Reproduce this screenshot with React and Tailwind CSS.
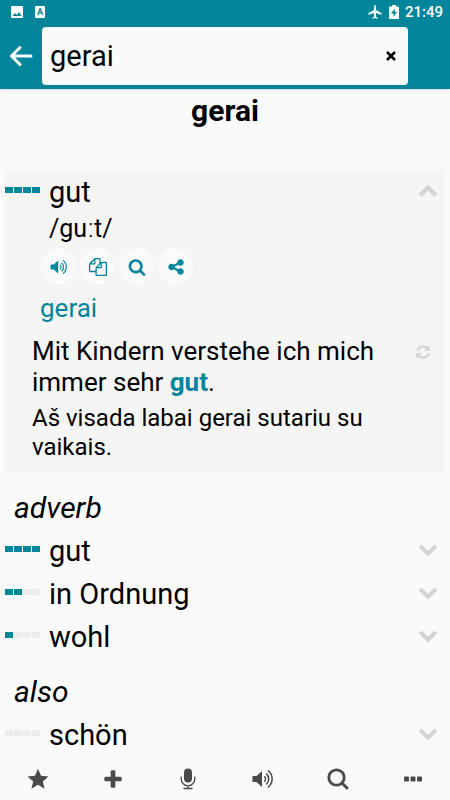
import { useState } from "react";

const paths = {
  up: "M1683 1331l-166 165q-19 19-45 19t-45-19l-531-531-531 531q-19 19-45 19t-45-19l-166-165q-19-19-19-45.5t19-45.5l742-741q19-19 45-19t45 19l742 741q19 19 19 45.5t-19 45.5z",
  down: "M1683 808l-742 741q-19 19-45 19t-45-19l-742-741q-19-19-19-45.5t19-45.5l166-165q19-19 45-19t45 19l531 531 531-531q19-19 45-19t45 19l166 165q19 19 19 45.5t-19 45.5z",
  refresh: "M1639 1056q0 5-1 7-64 268-268 434.5t-478 166.5q-146 0-282.5-55t-243.5-157l-129 129q-19 19-45 19t-45-19-19-45v-448q0-26 19-45t45-19h448q26 0 45 19t19 45-19 45l-137 137q71 66 161 102t187 36q134 0 250-65t186-179q11-17 53-117 8-23 30-23h192q13 0 22.5 9.5t9.5 22.5zm25-800v448q0 26-19 45t-45 19h-448q-26 0-45-19t-19-45 19-45l138-138q-148-137-349-137-134 0-250 65t-186 179q-11 17-53 117-8 23-30 23h-199q-13 0-22.5-9.5t-9.5-22.5v-7q65-268 270-434.5t480-166.5q146 0 284 55.5t245 156.5l130-129q19-19 45-19t45 19 19 45z",
  copy: "M1696 384q40 0 68 28t28 68v1216q0 40-28 68t-68 28h-960q-40 0-68-28t-28-68v-288h-544q-40 0-68-28t-28-68v-672q0-40 20-88t48-76l408-408q28-28 76-48t88-20h416q40 0 68 28t28 68v328q68-40 128-40h416zm-544 213l-299 299h299v-299zm-640-384l-299 299h299v-299zm196 647l316-316v-416h-384v416q0 40-28 68t-68 28h-416v640h512v-256q0-40 20-88t48-76zm956 804v-1152h-384v416q0 40-28 68t-68 28h-416v640h896z",
  search: "M1216 832q0-185-131.5-316.5t-316.5-131.5-316.5 131.5-131.5 316.5 131.5 316.5 316.5 131.5 316.5-131.5 131.5-316.5zm512 832q0 52-38 90t-90 38q-54 0-90-38l-343-342q-179 124-399 124-143 0-273.5-55.5t-225-150-150-225-55.5-273.5 55.5-273.5 150-225 225-150 273.5-55.5 273.5 55.5 225 150 150 225 55.5 273.5q0 220-124 399l343 343q37 37 37 90z",
  share: "M1344 1024q133 0 226.5 93.5t93.5 226.5-93.5 226.5-226.5 93.5-226.5-93.5-93.5-226.5q0-12 2-34l-360-180q-92 86-218 86-133 0-226.5-93.5t-93.5-226.5 93.5-226.5 226.5-93.5q126 0 218 86l360-180q-2-22-2-34 0-133 93.5-226.5t226.5-93.5 226.5 93.5 93.5 226.5-93.5 226.5-226.5 93.5q-126 0-218-86l-360 180q2 22 2 34t-2 34l360 180q92-86 218-86z",
  plus: "M1600 736v192q0 40-28 68t-68 28h-416v416q0 40-28 68t-68 28h-192q-40 0-68-28t-28-68v-416h-416q-40 0-68-28t-28-68v-192q0-40 28-68t68-28h416v-416q0-40 28-68t68-28h192q40 0 68 28t28 68v416h416q40 0 68 28t28 68z",
};

function Icon({ name, className, viewBox = "0 0 1792 1792" }) {
  return (
    <svg viewBox={viewBox} fill="currentColor" className={className} aria-hidden="true">
      <path d={paths[name]} />
    </svg>
  );
}

function Speaker({ className }) {
  return (
    <svg viewBox="0 0 22 20" className={className} fill="none" stroke="currentColor" aria-hidden="true">
      <path d="M.5 7h4L10 2v16l-5.500-5H.5z" fill="currentColor" stroke="none" />
      <path d="M12.300 7.300a3.500 3.500 0 0 1 0 5.400M14.200 4.600a7 7 0 0 1 0 10.800M16 1.700a10.400 10.400 0 0 1 0 16.600" strokeWidth="1.500" />
    </svg>
  );
}

function Frequency({ level }) {
  return (
    <div className="mb-1 flex w-[35px] shrink-0 gap-px" aria-hidden="true">
      {[1, 2, 3, 4].map((n) => (
        <span key={n} className={`h-1.5 w-2 ${n <= level ? "bg-[#00859b]" : "bg-[#ececec]"}`} />
      ))}
    </div>
  );
}

function WordRow({ word, level, open, onToggle }) {
  return (
    <div className="flex h-[43px] items-center">
      <Frequency level={level} />
      <span className="ml-[9px] flex-1 text-[29px] leading-9">{word}</span>
      <button type="button" onClick={onToggle} aria-label={`Toggle ${word}`} aria-expanded={open} className="px-[7px] text-[#d3d3d3]">
        <Icon name={open ? "up" : "down"} viewBox="0 200 1792 1792" className="size-5" />
      </button>
    </div>
  );
}

const groups = [
  {
    title: "adverb",
    words: [
      { word: "gut", level: 4 },
      { word: "in Ordnung", level: 2 },
      { word: "wohl", level: 1 },
    ],
  },
  { title: "also", words: [{ word: "schön", level: 0 }] },
];

const actions = [
  { label: "Listen", icon: <Speaker className="h-4 w-[18px]" /> },
  { label: "Copy", icon: <Icon name="copy" className="size-[18px]" /> },
  { label: "Search", icon: <Icon name="search" className="size-[18px]" /> },
  { label: "Share", icon: <Icon name="share" className="size-[18px]" /> },
];

const tabs = [
  {
    label: "Favorites",
    icon: (
      <svg viewBox="0 0 22 22" className="size-[22px]" fill="currentColor">
        <path d="M11 .8l3 7 7.500.6-5.700 5 1.800 7.400L11 16.800l-6.600 4 1.800-7.400-5.700-5L8 7.800z" />
      </svg>
    ),
  },
  { label: "Add", icon: <Icon name="plus" viewBox="0 -64 1792 1792" className="size-[22px]" /> },
  {
    label: "Dictate",
    icon: (
      <svg viewBox="0 0 16 22" className="h-[22px] w-4" fill="none" stroke="currentColor">
        <rect x="4" y=".5" width="8" height="14" rx="4" fill="currentColor" stroke="none" />
        <path d="M1.200 8.500v2.500a6.800 6.800 0 0 0 13.600 0V8.500M8 17.500v3M3.500 20.500h9" strokeWidth="1.300" />
      </svg>
    ),
  },
  { label: "Listen", icon: <Speaker className="h-5 w-[22px]" /> },
  {
    label: "Search",
    icon: (
      <svg viewBox="0 0 22 22" className="size-[22px]" fill="none" stroke="currentColor">
        <circle cx="9.500" cy="9.500" r="7.700" strokeWidth="2.800" />
        <path d="M15 15l5 5" strokeWidth="3" strokeLinecap="round" />
      </svg>
    ),
  },
  {
    label: "More",
    icon: (
      <svg viewBox="0 0 18 6" className="h-1.5 w-[18px]" fill="currentColor">
        <rect x="0" y=".5" width="5" height="5" rx="1" />
        <rect x="6.500" y=".5" width="5" height="5" rx="1" />
        <rect x="13" y=".5" width="5" height="5" rx="1" />
      </svg>
    ),
  },
];

function StatusBar() {
  return (
    <div className="flex h-6 items-center pr-[7px] pl-[11px]">
      <svg viewBox="0 0 12 12" className="size-3">
        <rect width="12" height="12" rx="1" fill="currentColor" />
        <path d="M1.500 10l2.500-3 1.700 2L8 6l2.700 4z" fill="#00859b" />
      </svg>
      <span className="ml-3 flex h-3 w-2.5 items-center justify-center rounded-[1px] bg-white text-[9px] leading-3 font-bold text-[#00859b]">A</span>
      <svg viewBox="0 0 24 24" className="ml-auto size-4" fill="currentColor">
        <path d="M22 16v-2l-8.500-5V3.500a1.500 1.500 0 0 0-3 0V9L2 14v2l8.500-2.500V19L8 20.500V22l4-1 4 1v-1.500L13.500 19v-5.500z" />
      </svg>
      <svg viewBox="0 0 10 14" className="ml-1.5 h-3.5 w-2.5">
        <path d="M3 0h4v1.500h2q1 0 1 1V13q0 1-1 1H1q-1 0-1-1V2.500q0-1 1-1h2z" fill="currentColor" />
        <path d="M5.800 3.500L2 8.500h2.500v3.500L8 7H5.800z" fill="#00859b" />
      </svg>
      <span className="ml-1.5 text-[15px] leading-6 font-medium">21:49</span>
    </div>
  );
}

export default function App() {
  const [query, setQuery] = useState("gerai");
  const [open, setOpen] = useState(true);

  return (
    <div className="flex min-h-screen flex-col bg-[#fafafa] font-['Roboto',sans-serif] text-black">
      <header className="bg-[#00859b] text-white shadow-sm">
        <StatusBar />
        <div className="flex items-center pt-[3px] pr-[42px] pb-1">
          <button type="button" aria-label="Back" className="flex w-[42px] justify-center">
            <svg viewBox="0 0 24 22" className="h-[22px] w-6" fill="none" stroke="currentColor" strokeWidth="3" strokeLinecap="round" strokeLinejoin="round">
              <path d="M22 11H2.500M11 2.500L2.500 11l8.500 8.500" />
            </svg>
          </button>
          <div className="flex h-[58px] min-w-0 flex-1 items-center rounded bg-[#fafafa] pr-3 pl-2 text-black">
            <input
              aria-label="Search"
              value={query}
              onChange={(e) => setQuery(e.target.value)}
              className="min-w-0 flex-1 bg-transparent text-[29px] leading-9 outline-none"
            />
            <button type="button" aria-label="Clear" onClick={() => setQuery("")}>
              <svg viewBox="0 0 10 10" className="size-2.5" stroke="currentColor" strokeWidth="2.500">
                <path d="M1 1l8 8M9 1L1 9" />
              </svg>
            </button>
          </div>
        </div>
      </header>

      <main className="flex-1 px-[5px]">
        <h1 className="mt-1 mb-[41px] text-center text-[30px] leading-9 font-bold">gerai</h1>

        <section className="mb-0.5 bg-[#f5f5f5] pb-2.5">
          <WordRow word="gut" level={4} open={open} onToggle={() => setOpen(!open)} />
          {open && (
            <>
              <p className="pl-11 text-[25px] leading-8">/guːt/</p>
              <div className="mt-1 flex gap-1 pl-9">
                {actions.map((a) => (
                  <button key={a.label} type="button" aria-label={a.label} className="flex size-[35px] items-center justify-center rounded-full bg-[#fafafa] text-[#00859b]">
                    {a.icon}
                  </button>
                ))}
              </div>
              <p className="mt-2 pl-[35px] text-[26px] leading-8 text-[#00859b]">gerai</p>
              <div className="mt-3 flex items-start pr-3.5 pl-[27px]">
                <div className="flex-1">
                  <p className="mb-1.5 text-[26px] leading-[31px]">
                    Mit Kindern verstehe ich mich immer sehr <b className="text-[#00859b]">gut</b>.
                  </p>
                  <p className="text-[24px] leading-[29px]">Aš visada labai gerai sutariu su vaikais.</p>
                </div>
                <button type="button" aria-label="Another example" className="mt-2 text-[#d3d3d3]">
                  <Icon name="refresh" className="size-4" />
                </button>
              </div>
            </>
          )}
        </section>

        {groups.map((g) => (
          <section key={g.title} className="pt-3">
            <h2 className="pl-[9px] text-[30px] leading-[43px] italic">{g.title}</h2>
            {g.words.map((w) => (
              <WordRow key={w.word} word={w.word} level={w.level} />
            ))}
          </section>
        ))}
      </main>

      <nav className="sticky bottom-0 grid h-[43px] grid-cols-6 bg-[#fafafa] text-[#4a4a4a]">
        {tabs.map((t) => (
          <button key={t.label} type="button" aria-label={t.label} className="flex items-center justify-center">
            {t.icon}
          </button>
        ))}
      </nav>
    </div>
  );
}
